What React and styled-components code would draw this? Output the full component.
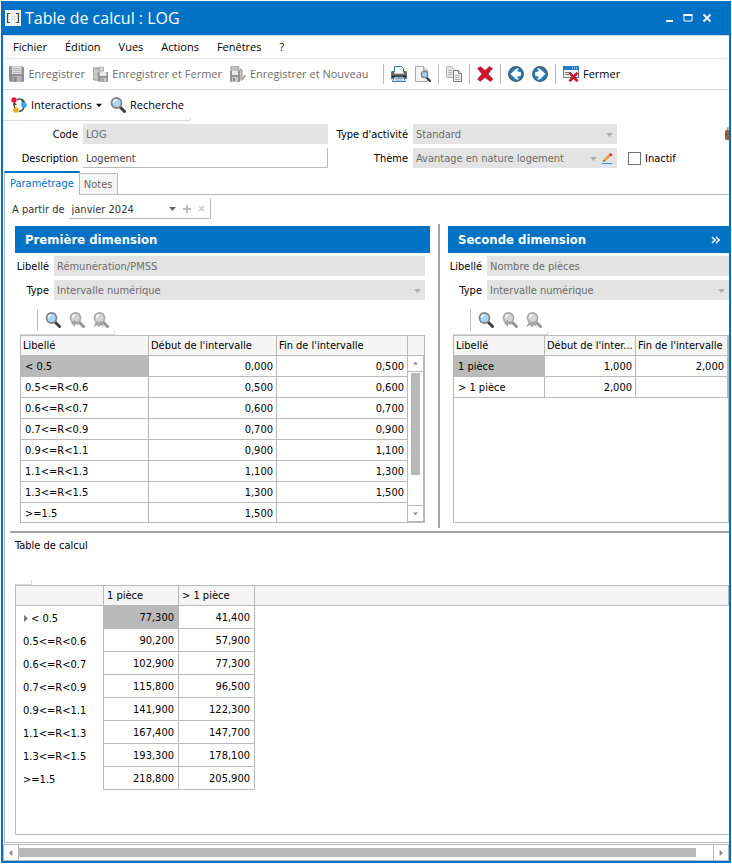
import React from 'react'
import styled, { createGlobalStyle, css } from 'styled-components'

const blue = '#0072c6'
const line = '#b9b9b9'
const soft = '#d9d9d9'
const uiFont = '"Open Sans", "Noto Sans", sans-serif'
const dataFont = '"DejaVu Sans Condensed", "DejaVu Sans", sans-serif'

const GlobalStyle = createGlobalStyle`
  *{
    box-sizing: border-box;
  }
  body{
    margin: 0;
    background: #fff;
    font-family: ${dataFont};
    font-size: 11px;
    line-height: 16px;
    color: #000;
  }
  button, input, select{
    font: inherit;
    color: inherit;
    margin: 0;
    padding: 0;
    border: 0;
    border-radius: 0;
    background: none;
    opacity: 1;
  }
`

const firstDimension = [
  ['< 0.5', '0,000', '0,500'],
  ['0.5<=R<0.6', '0,500', '0,600'],
  ['0.6<=R<0.7', '0,600', '0,700'],
  ['0.7<=R<0.9', '0,700', '0,900'],
  ['0.9<=R<1.1', '0,900', '1,100'],
  ['1.1<=R<1.3', '1,100', '1,300'],
  ['1.3<=R<1.5', '1,300', '1,500'],
  ['>=1.5', '1,500', ''],
]

const secondDimension = [
  ['1 pièce', '1,000', '2,000'],
  ['> 1 pièce', '2,000', ''],
]

const results = [
  ['< 0.5', '77,300', '41,400'],
  ['0.5<=R<0.6', '90,200', '57,900'],
  ['0.6<=R<0.7', '102,900', '77,300'],
  ['0.7<=R<0.9', '115,800', '96,500'],
  ['0.9<=R<1.1', '141,900', '122,300'],
  ['1.1<=R<1.3', '167,400', '147,700'],
  ['1.3<=R<1.5', '193,300', '178,100'],
  ['>=1.5', '218,800', '205,900'],
]

/* icons */

const Icon = ({ size = 16, children }) => (
  <svg width={size} height={size} viewBox={`0 0 ${size} ${size}`} aria-hidden="true">{children}</svg>
)

const TableIcon = () => (
  <Icon>
    <rect width="16" height="16" fill="#fff" />
    <path d="M3.5 0v16M6.5 0v16M9.5 0v16M12.5 0v16M0 3.5h16M0 6.5h16M0 9.5h16M0 12.5h16" stroke="#dfe7e4" />
    <path d="M5 3.500H2.500v9H5M11 3.500h2.500v9H11" fill="none" stroke="#454545" strokeWidth="1.200" />
  </Icon>
)

const SaveIcon = () => (
  <Icon>
    <path d="M0 0h14l2 2v14H1l-1-1z" fill="#8f8f8f" />
    <path d="M3 0h10v8H3z" fill="#dedede" />
    <path d="M4 2.5h8M4 4.5h8M4 6.500h8" stroke="#b5b5b5" />
    <path d="M4 10h9v6H4z" fill="#b4b4b4" />
    <path d="M5 11h3v5H5z" fill="#858585" />
  </Icon>
)

const SaveCloseIcon = () => (
  <Icon>
    <path d="M0 1h7v14H2l-2-1z" fill="#a6a6a6" />
    <path d="M1 2l5 1v12l-5-2z" fill="#c6c6c6" />
    <path d="M7 1h4v4H7z" fill="#d9d9d9" stroke="#aaa" />
    <path d="M5 6h11v10H6l-1-1z" fill="#939393" />
    <path d="M7 6h7v4H7z" fill="#ececec" />
    <path d="M8 12h6v4H8z" fill="#cecece" />
    <path d="M9 13h2v3H9z" fill="#8b8b8b" />
  </Icon>
)

const SaveNewIcon = () => (
  <Icon>
    <path d="M1 0h7l4 4v9H1z" fill="#c5c5c5" stroke="#999" />
    <path d="M8 0v4h4" fill="#eee" stroke="#999" />
    <path d="M0 5h10v11H1l-1-1z" fill="#929292" />
    <path d="M2 5h6v4H2z" fill="#e8e8e8" />
    <path d="M2 11h6v5H2z" fill="#c8c8c8" />
    <path d="M3 12h2v3H3z" fill="#858585" />
    <path d="M10.500 15.500l1-3 3-4 1.500 1.500-3 4z" fill="#aaa" />
  </Icon>
)

const PrintIcon = () => (
  <Icon>
    <path d="M3.500 6.500v-6h7l2 2v4" fill="#fff" stroke="#2d7cba" />
    <path d="M0 6l1-1h2v2h10V5h2l1 1v7H0z" fill="#6a6a6a" />
    <path d="M3 7.500h10" stroke="#c9c9c9" />
    <path d="M1 10.500h14" stroke="#1e1e1e" strokeWidth="1.500" />
    <path d="M3.500 11h9l2 4.500h-13z" fill="#fff" stroke="#2d7cba" />
    <path d="M4.500 12.500h7M4 14h8" stroke="#999" />
  </Icon>
)

const PreviewIcon = () => (
  <Icon>
    <path d="M.5 .5h8l4 4v11H.5z" fill="#f4f4f4" stroke="#a8a8a8" />
    <path d="M8.500 .5v4h4" fill="#ddd" stroke="#a8a8a8" />
    <path d="M12 12l3 3" stroke="#3c3c3c" strokeWidth="2.400" strokeLinecap="round" />
    <circle cx="9.500" cy="8.500" r="3.200" fill="#9dcdf2" stroke="#7c8790" strokeWidth="1.300" />
  </Icon>
)

const CopyIcon = () => (
  <Icon>
    <path d="M.5 .5h5l3 3v8h-8z" fill="#e4e4e4" stroke="#b8b8b8" />
    <path d="M2 4.500h4M2 6.500h4M2 8.500h4" stroke="#b5b5b5" />
    <path d="M7.500 4.500h5l3 3v8h-8z" fill="#f3f3f3" stroke="#747474" />
    <path d="M12.500 4.500v3h3" fill="#fff" stroke="#747474" />
    <path d="M9 9.500h5M9 11.500h5M9 13.500h5" stroke="#aaa" />
  </Icon>
)

const DeleteIcon = () => (
  <Icon>
    <path d="M.5 2.500L3.500.5 8 4.500 12.500.5l3 2L11 8l5 5-2.500 2.500L8 11.500 3 15.500.5 13 5 8z" fill="#d0142c" stroke="#a01020" strokeWidth=".5" />
  </Icon>
)

const ArrowIcon = ({ flip }) => (
  <Icon>
    <circle cx="8" cy="8" r="7.200" fill="#1d7fc4" stroke="#4c5963" strokeWidth="1.500" />
    <path
      transform={flip ? 'rotate(180 8 8)' : undefined}
      d="M8.500 2.500L2.500 8l6 5.500h2.500L9 11l4-1.500v-3L9 5l2-2.500z"
      fill="#fff"
    />
  </Icon>
)

const CloseIcon = () => (
  <Icon>
    <path d="M.5 1.500h15v10H.5z" fill="#f6f6f6" stroke="#6b7882" />
    <path d="M0 0h16v4H0z" fill="#1d7fc4" />
    <path d="M9 2h1M11 2h1M13 2h1" stroke="#fff" />
    <path d="M2 6.500h6M2 8.500h4" stroke="#777" />
    <path d="M5.500 7.500l2-1.500L10.500 9l3-3 2 1.500-3 3.500 3 3.500-2 1.500-3-3-3 3-2-1.500L8.500 11z" fill="#d0142c" />
  </Icon>
)

const InteractionsIcon = () => (
  <Icon>
    <path d="M6 2.500c4-1.500 6.500 0 7.500 3M13 10c-.5 2.500-2 4-5 4.500M2.800 5.500l1 6" fill="none" stroke="#4a4a4a" strokeWidth="1.400" />
    <path d="M2 8l1.500-3L6 8zM10 2l1 4 3-1z" fill="#4a4a4a" />
    <circle cx="3" cy="3" r="2.700" fill="#e3173e" />
    <circle cx="13" cy="8" r="2.700" fill="#2ba5e4" />
    <circle cx="5" cy="13" r="2.700" fill="#eeaa17" />
  </Icon>
)

const SearchIcon = ({ off, mark }) => (
  <Icon>
    <path d="M10 10l4.500 4.500" stroke={off ? '#969696' : '#3c3c3c'} strokeWidth="3" strokeLinecap="round" />
    <circle cx="6.500" cy="6" r="5" fill={off ? '#d4d4d4' : '#a9d6f8'} stroke={off ? '#ababab' : '#858585'} strokeWidth="1.800" />
    <path d="M3.500 6a3 3 0 0 1 3-3" fill="none" stroke="#fff" strokeWidth="1.300" />
    {mark === 'prev' && <path d="M2 11l4-3.500v2h4v3H6v2.500z" fill="#a5a5a5" />}
    {mark === 'next' && <path d="M0 15l3-5 3 2 2-3 3 6-3-2-2 2-2-2z" fill="#a0a0a0" />}
  </Icon>
)

const PencilIcon = () => (
  <svg width="11" height="11" viewBox="0 0 11 11" aria-hidden="true">
    <path d="M0 10.500h10" stroke="#3b8fd0" />
    <path d="M1 9l1-3 5-5 2 2-5.500 5z" fill="#f09a32" />
    <path d="M1 9l.7-2.500 1.500 1.500z" fill="#555" />
    <path d="M7 1.500L8.500 0l2 2L9 3.500z" fill="#dc2438" />
  </svg>
)

const BagIcon = () => (
  <svg width="16" height="16" viewBox="0 0 16 16" aria-hidden="true">
    <path d="M2.500 5V2h5" fill="none" stroke="#999" strokeWidth="1.500" />
    <rect x="0" y="4" width="16" height="10" rx="1.500" fill="#99623f" />
    <path d="M0 8h16" stroke="#7c4b2d" />
  </svg>
)

const paths = {
  down: 'M0 2h7L3.500 6z',
  up: 'M0 5h7L3.500 1z',
  left: 'M5 0v7L1 3.500z',
  right: 'M2 0v7l4-3.500z',
}

const Triangle = ({ to = 'down', fill = '#b0b0b0', size = 7 }) => (
  <svg width={size} height={size} viewBox="0 0 7 7" aria-hidden="true"><path d={paths[to]} fill={fill} /></svg>
)

/* parts */

function Select({ id, value, children }) {
  return (
    <SelectBox>
      <select id={id} disabled defaultValue={value}>
        <option>{value}</option>
      </select>
      <Triangle />
      {children}
    </SelectBox>
  )
}

function IntervalTable({ rows, headings, widths }) {
  const total = widths.reduce((sum, w) => sum + w, 0)
  return (
    <DataTable>
      <colgroup>
        {widths.map((w, i) => <col key={i} style={{ width: `${(w / total) * 100}%` }} />)}
      </colgroup>
      <thead>
        <tr>
          {headings.map((h) => <HeadCell key={h}>{h}</HeadCell>)}
        </tr>
      </thead>
      <tbody>
        {rows.map(([label, from, to], i) => (
          <tr key={label}>
            <Cell $selected={i === 0}>{label}</Cell>
            <Cell $number>{from}</Cell>
            <Cell $number>{to}</Cell>
          </tr>
        ))}
      </tbody>
    </DataTable>
  )
}

function Dimension({ id, title, label, rows, headings, widths, scroll, more }) {
  return (
    <Panel>
      <PanelTitle>
        {title}
        {more && (
          <MoreButton aria-label="Développer">
            <svg width="9" height="8" viewBox="0 0 9 8"><path d="M1 1l3 3-3 3M5 1l3 3-3 3" fill="none" stroke="#fff" strokeWidth="1.600" /></svg>
          </MoreButton>
        )}
      </PanelTitle>
      <PanelBody $open={more}>
        <PanelFields>
          <FieldLabel htmlFor={`${id}-label`}>Libellé</FieldLabel>
          <Input id={`${id}-label`} defaultValue={label} disabled />
          <FieldLabel htmlFor={`${id}-type`}>Type</FieldLabel>
          <Select id={`${id}-type`} value="Intervalle numérique" />
        </PanelFields>
        <SearchBar>
          <Separator />
          <IconButton aria-label="Rechercher"><SearchIcon /></IconButton>
          <IconButton aria-label="Précédent" disabled><SearchIcon off mark="prev" /></IconButton>
          <IconButton aria-label="Suivant" disabled><SearchIcon off mark="next" /></IconButton>
        </SearchBar>
        <GridBox>
          <IntervalTable rows={rows} headings={headings} widths={widths} />
          {scroll && (
            <ScrollColumn>
              <ScrollHead />
              <ScrollTrack>
                <ScrollButton aria-label="Monter"><Triangle to="up" fill="#888" size={5} /></ScrollButton>
                <Thumb $vertical />
                <ScrollButton $end aria-label="Descendre"><Triangle fill="#888" size={5} /></ScrollButton>
              </ScrollTrack>
            </ScrollColumn>
          )}
        </GridBox>
      </PanelBody>
    </Panel>
  )
}

function App() {
  return (
    <Page>
      <GlobalStyle />
      <Window>
        <TitleBar>
          <TableIcon />
          <Title>Table de calcul : LOG</Title>
          <WindowButton aria-label="Réduire"><svg width="10" height="10"><path d="M2 8h7" stroke="#fff" strokeWidth="2" /></svg></WindowButton>
          <WindowButton aria-label="Agrandir"><svg width="10" height="10"><path d="M1 2h8v6H1z" fill="none" stroke="#fff" /><path d="M.5 2h9" stroke="#fff" strokeWidth="2" /></svg></WindowButton>
          <WindowButton aria-label="Quitter"><svg width="10" height="10"><path d="M1.500 1.500l7 7M8.500 1.500l-7 7" stroke="#fff" strokeWidth="1.800" /></svg></WindowButton>
        </TitleBar>

        <MenuBar>
          {['Fichier', 'Édition', 'Vues', 'Actions', 'Fenêtres', '?'].map((m) => (
            <MenuButton key={m}>{m}</MenuButton>
          ))}
        </MenuBar>

        <ToolBar>
          <ToolButton $width={76} disabled><SaveIcon />Enregistrer</ToolButton>
          <ToolButton $width={129} disabled><SaveCloseIcon />Enregistrer et Fermer</ToolButton>
          <ToolButton $width={146} disabled><SaveNewIcon />Enregistrer et Nouveau</ToolButton>
          <Separator />
          <IconButton aria-label="Imprimer"><PrintIcon /></IconButton>
          <IconButton aria-label="Aperçu"><PreviewIcon /></IconButton>
          <Separator />
          <IconButton aria-label="Copier"><CopyIcon /></IconButton>
          <Separator />
          <IconButton aria-label="Supprimer"><DeleteIcon /></IconButton>
          <Separator />
          <IconButton aria-label="Fiche précédente"><ArrowIcon /></IconButton>
          <IconButton aria-label="Fiche suivante"><ArrowIcon flip /></IconButton>
          <Separator />
          <ToolButton><CloseIcon />Fermer</ToolButton>
        </ToolBar>

        <SubBar>
          <ToolButton $width={91}><InteractionsIcon />Interactions<Triangle fill="#111" size={6} /></ToolButton>
          <ToolButton><SearchIcon />Recherche</ToolButton>
        </SubBar>

        <Form>
          <FieldLabel htmlFor="code">Code</FieldLabel>
          <Input id="code" defaultValue="LOG" disabled />
          <FieldLabel htmlFor="activity">Type d'activité</FieldLabel>
          <Select id="activity" value="Standard" />
          <FormEnd $right><BagIcon /></FormEnd>
          <FieldLabel htmlFor="description">Description</FieldLabel>
          <Input id="description" defaultValue="Logement" />
          <FieldLabel htmlFor="theme">Thème</FieldLabel>
          <Select id="theme" value="Avantage en nature logement">
            <IconLink href="#theme" aria-label="Modifier le thème"><PencilIcon /></IconLink>
          </Select>
          <FormEnd>
            <CheckBox id="inactive" type="checkbox" />
            <label htmlFor="inactive">Inactif</label>
          </FormEnd>
        </Form>

        <Tabs role="tablist">
          <Tab role="tab" aria-selected="true" $active>Paramétrage</Tab>
          <Tab role="tab" aria-selected="false">Notes</Tab>
        </Tabs>

        <TabPanel role="tabpanel">
          <PeriodRow>
            <label htmlFor="period">A partir de</label>
            <PeriodBox>
              <select id="period" defaultValue="janvier 2024">
                <option>janvier 2024</option>
              </select>
              <Triangle fill="#666" />
              <SmallButton aria-label="Ajouter"><svg width="8" height="8"><path d="M4 0v8M0 4h8" stroke="#bbb" strokeWidth="2" /></svg></SmallButton>
              <SmallButton aria-label="Retirer" disabled><svg width="8" height="8"><path d="M1 1l5 5M6 1L1 6" stroke="#ccc" strokeWidth="1.500" /></svg></SmallButton>
            </PeriodBox>
          </PeriodRow>

          <Dimensions>
            <Dimension
              id="first"
              title="Première dimension"
              label="Rémunération/PMSS"
              rows={firstDimension}
              headings={['Libellé', "Début de l'intervalle", "Fin de l'intervalle"]}
              widths={[128, 128, 131]}
              scroll
            />
            <Splitter />
            <Dimension
              id="second"
              title="Seconde dimension"
              label="Nombre de pièces"
              rows={secondDimension}
              headings={['Libellé', "Début de l'inter...", "Fin de l'intervalle"]}
              widths={[91, 91, 92]}
              more
            />
          </Dimensions>

          <ResultSection>
            <ResultTitle>Table de calcul</ResultTitle>
            <ResultBox>
              <ResultTable>
                <colgroup>
                  <col style={{ width: 88 }} />
                  <col style={{ width: 75 }} />
                  <col style={{ width: 76 }} />
                  <col />
                </colgroup>
                <thead>
                  <tr>
                    <HeadCell />
                    <HeadCell>1 pièce</HeadCell>
                    <HeadCell>&gt; 1 pièce</HeadCell>
                    <HeadCell />
                  </tr>
                </thead>
                <tbody>
                  {results.map(([label, one, more], i) => (
                    <tr key={label}>
                      <RowLabel scope="row">
                        {i === 0 && <Triangle to="right" fill="#777" />}
                        {label}
                      </RowLabel>
                      <Cell $number $selected={i === 0}>{one}</Cell>
                      <Cell $number>{more}</Cell>
                    </tr>
                  ))}
                </tbody>
              </ResultTable>
            </ResultBox>
          </ResultSection>
        </TabPanel>

        <ScrollBar>
          <ScrollButton $side="left" aria-label="Gauche"><Triangle to="left" fill="#888" size={6} /></ScrollButton>
          <Thumb />
          <ScrollButton $side="right" aria-label="Droite"><Triangle to="right" fill="#888" size={6} /></ScrollButton>
        </ScrollBar>
      </Window>
    </Page>
  )
}

export default App

const Page = styled.div`
  height: 100vh;
  padding: 1px;
`
const Window = styled.main`
  display: flex;
  flex-direction: column;
  height: 100%;
  border: 2px solid ${blue};
  border-top: 0;
  overflow: hidden;
`
const TitleBar = styled.header`
  display: flex;
  align-items: center;
  flex: none;
  height: 34px;
  padding: 0 17px 0 2px;
  background: ${blue};
  color: #fff;
  font-family: ${uiFont};
`
const Title = styled.h1`
  flex: 1;
  margin: 0 0 0 4px;
  font-size: 16px;
  line-height: 24px;
  font-weight: 400;
`
const WindowButton = styled.button`
  display: flex;
  margin-left: 9px;
`
const MenuBar = styled.nav`
  display: flex;
  align-items: center;
  flex: none;
  gap: 18px;
  height: 24px;
  padding: 0 10px;
  border-top: 1px solid ${soft};
  border-bottom: 1px solid #e6e6e6;
  font-family: ${uiFont};
`
const MenuButton = styled.button``

const ToolBar = styled.div`
  display: flex;
  align-items: center;
  flex: none;
  gap: 8px;
  height: 31px;
  padding: 0 6px;
  border-bottom: 1px solid ${soft};
  font-family: ${uiFont};
`
const SubBar = styled(ToolBar)`
  align-self: flex-start;
  width: 188px;
  padding: 0 8px;
  border-right: 1px solid transparent;
  border-image: linear-gradient(to top, ${soft} 4px, transparent 4px) 1;
`
const ToolButton = styled.button`
  display: flex;
  align-items: center;
  gap: 4px;
  width: ${({ $width }) => ($width ? `${$width}px` : 'auto')};
  white-space: nowrap;
  &:disabled{
    color: #6d6d6d;
  }
`
const IconButton = styled.button`
  display: flex;
`
const Separator = styled.span`
  width: 1px;
  height: 20px;
  margin: 0 -1px;
  background: ${line};
`
const Form = styled.form`
  display: grid;
  grid-template-columns: 80px 245fr 85px 204fr 112px;
  grid-auto-rows: 20px;
  row-gap: 4px;
  align-items: center;
  flex: none;
  padding: 3px 0;
`
const FieldLabel = styled.label`
  padding: 2px 5px 0 0;
  text-align: right;
  white-space: nowrap;
`
const Input = styled.input`
  width: 100%;
  min-width: 0;
  height: 20px;
  padding: 2px 3px 0;
  color: #444;
  border-right: 1px solid ${line};
  border-bottom: 1px solid ${line};
  &:disabled{
    color: #6d6d6d;
    background: #e3e3e3;
    border-color: #e3e3e3;
  }
`
const SelectBox = styled.div`
  display: flex;
  align-items: center;
  gap: 5px;
  min-width: 0;
  height: 20px;
  padding: 0 4px 0 3px;
  background: #e3e3e3;
  select{
    flex: 1;
    min-width: 0;
    padding-top: 2px;
    appearance: none;
    color: #6d6d6d;
    opacity: 1;
  }
`
const IconLink = styled.a`
  display: flex;
`
const FormEnd = styled.div`
  display: flex;
  align-items: center;
  gap: 4px;
  padding-left: ${({ $right }) => ($right ? '108px' : '11px')};
  overflow: hidden;
  svg{
    flex: none;
  }
  label{
    padding-top: 2px;
  }
`
const CheckBox = styled.input`
  appearance: none;
  width: 13px;
  height: 13px;
  border: 1px solid #707070;
  &:checked{
    background: ${blue};
  }
`
const Tabs = styled.div`
  display: flex;
  align-items: flex-end;
  flex: none;
  height: 24px;
  margin-left: 1px;
  background: linear-gradient(${line}, ${line}) bottom / 100% 1px no-repeat;
`
const Tab = styled.button`
  height: 22px;
  padding: 1px 5px 0 4px;
  border: 1px solid ${line};
  border-left: 0;
  background: #f5f5f5;
  color: #666;
  ${({ $active }) => $active && css`
    height: 24px;
    padding: 0 5px;
    border-left: 1px solid ${line};
    border-top: 2px solid ${blue};
    border-bottom: 0;
    background: #fff;
    color: ${blue};
  `}
`
const TabPanel = styled.section`
  display: flex;
  flex-direction: column;
  flex: 1;
  min-height: 0;
  margin-left: 1px;
  padding: 4px 0 7px;
  border-left: 1px solid ${line};
  border-bottom: 1px solid ${line};
`
const PeriodRow = styled.div`
  display: flex;
  align-items: center;
  gap: 4px;
  padding-left: 7px;
  label{
    padding-top: 2px;
    color: #333;
  }
`
const PeriodBox = styled.div`
  display: flex;
  align-items: center;
  gap: 7px;
  width: 142px;
  height: 20px;
  padding: 0 4px 0 3px;
  border-right: 1px solid ${line};
  border-bottom: 1px solid ${line};
  select{
    flex: 1;
    padding-top: 2px;
    appearance: none;
    color: #333;
  }
`
const SmallButton = styled.button`
  display: flex;
`
const Dimensions = styled.div`
  display: grid;
  grid-template-columns: 415fr 2px 281fr;
  column-gap: 8px;
  margin-left: 5px;
  padding: 5px 0 3px 5px;
  border-bottom: 2px solid #a5a0a0;
`
const Splitter = styled.div`
  background: #a5a0a0;
`
const Panel = styled.section`
  min-width: 0;
  padding: 2px 0 5px;
`
const PanelTitle = styled.h2`
  display: flex;
  align-items: center;
  justify-content: space-between;
  height: 27px;
  margin: 0;
  padding: 0 9px 0 10px;
  background: ${blue};
  color: #fff;
  font-size: 13px;
  line-height: 20px;
`
const MoreButton = styled.button`
  display: flex;
`
const PanelBody = styled.div`
  padding: 3px ${({ $open }) => ($open ? 0 : '5px')} 0 0;
`
const PanelFields = styled.div`
  display: grid;
  grid-template-columns: 39px 1fr;
  grid-auto-rows: 20px;
  row-gap: 4px;
  align-items: center;
`
const SearchBar = styled.div`
  display: flex;
  align-items: center;
  gap: 8px;
  width: 95px;
  height: 30px;
  margin: 5px 0 0 5px;
  padding: 0 0 0 18px;
  border: 0 solid transparent;
  border-width: 0 1px 1px 0;
  border-image: linear-gradient(to top, ${soft} 4px, transparent 4px) 1;
`
const GridBox = styled.div`
  display: flex;
  height: 188px;
  margin-left: 5px;
  border: 1px solid ${line};
  overflow: hidden;
`
const DataTable = styled.table`
  flex: 1;
  min-width: 0;
  align-self: flex-start;
  table-layout: fixed;
  width: 100%;
  border-collapse: separate;
  border-spacing: 0;
`
const HeadCell = styled.th`
  height: 20px;
  padding: 0 2px;
  border-right: 1px solid ${line};
  border-bottom: 1px solid ${line};
  background: #f5f5f5;
  font-weight: 400;
  text-align: left;
  white-space: nowrap;
  overflow: hidden;
`
const Cell = styled.td`
  height: 21px;
  padding: 2px 3px 0 4px;
  border-right: 1px solid ${line};
  border-bottom: 1px solid ${line};
  background: ${({ $selected }) => ($selected ? line : '#fff')};
  text-align: ${({ $number }) => ($number ? 'right' : 'left')};
`
const ScrollColumn = styled.div`
  display: flex;
  flex-direction: column;
  flex: none;
  width: 16px;
`
const ScrollHead = styled.div`
  height: 20px;
  background: #f5f5f5;
  border-bottom: 1px solid ${line};
`
const ScrollTrack = styled.div`
  display: flex;
  flex-direction: column;
  align-items: center;
  flex: 1;
  border-right: 1px solid ${line};
  border-bottom: 1px solid ${line};
`
const ScrollButton = styled.button`
  display: flex;
  align-items: center;
  justify-content: center;
  flex: none;
  width: 15px;
  height: 16px;
  border-bottom: 1px solid ${line};
  ${({ $end }) => $end && css`
    margin-top: auto;
    border-bottom: 0;
    border-top: 1px solid ${line};
  `}
  ${({ $side }) => $side && css`
    border-bottom: 0;
    border-${$side === 'left' ? 'right' : 'left'}: 1px solid ${line};
  `}
`
const Thumb = styled.div`
  flex: 1;
  height: 9px;
  margin-right: 17px;
  background: ${line};
  ${({ $vertical }) => $vertical && css`
    flex: none;
    width: 9px;
    height: 62%;
    margin: 1px 0 0;
  `}
`
const ResultSection = styled.section`
  display: flex;
  flex-direction: column;
  flex: 1;
  min-height: 0;
  padding-left: 10px;
`
const ResultTitle = styled.h3`
  position: relative;
  height: 52px;
  margin: 0;
  padding-top: 5px;
  font-size: 11px;
  font-weight: 400;
  &::after{
    content: '';
    position: absolute;
    left: 0;
    bottom: 0;
    width: 16px;
    height: 4px;
    border-right: 1px solid ${soft};
    border-bottom: 1px solid ${soft};
  }
`
const ResultBox = styled.div`
  flex: 1;
  min-height: 0;
  border: 1px solid ${line};
  border-right: 0;
  overflow: hidden;
`
const ResultTable = styled(DataTable)`
  ${HeadCell}{
    padding: 0 4px 0 3px;
  }
  ${Cell}{
    height: 23px;
    padding-right: 4px;
  }
`
const RowLabel = styled.th`
  padding: 3px 0 0 7px;
  border-right: 1px solid ${line};
  font-weight: 400;
  text-align: left;
  svg{
    margin: 0 2px 0 -1px;
  }
`
const ScrollBar = styled.div`
  display: flex;
  align-items: center;
  flex: none;
  height: 17px;
  margin: 1px 0 0;
  border: 1px solid ${line};
`
